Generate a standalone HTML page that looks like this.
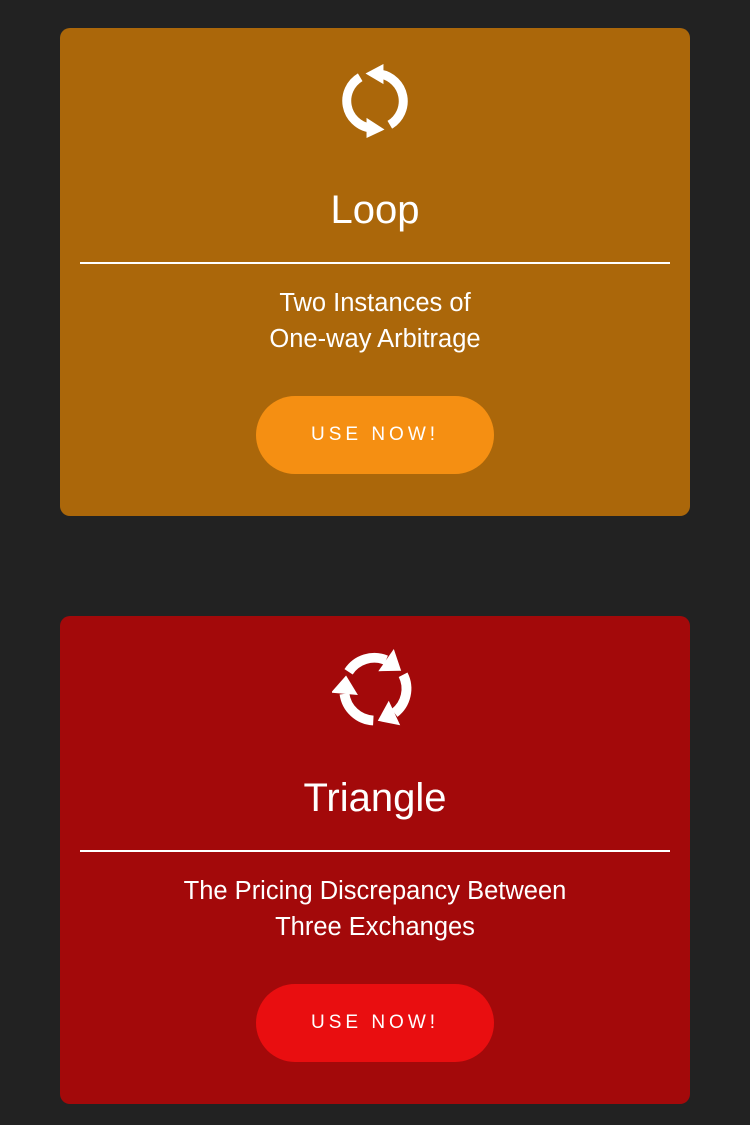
<!DOCTYPE html>
<html><head><meta charset="utf-8"><style>
body{margin:0;background:#222222;width:750px;height:1125px;position:relative;font-family:"Liberation Sans",sans-serif;color:#fff;overflow:hidden}
.card{position:absolute;left:60px;width:630px;height:488px;border-radius:10px}
.icon{position:absolute;left:50%;transform:translateX(-50%)}
.title{position:absolute;left:0;right:0;text-align:center;font-size:40px;font-weight:300;line-height:48px}
.hr{position:absolute;left:20px;right:20px;height:2px;background:#fff;top:234px}
.desc{position:absolute;left:0;right:0;top:257px;text-align:center;font-size:25.5px;line-height:36px}
.btn{position:absolute;left:196px;width:238px;height:78px;top:368px;border-radius:39px;text-align:center;line-height:78px;font-size:19px;letter-spacing:4px}
</style></head><body>
<div class="card" style="top:28px;background:#ab670a">
 <svg class="icon" style="top:36px" width="74" height="74" viewBox="0 0 70 70">
  <g fill="none" stroke="#fff" stroke-width="8.5">
   <path d="M21 12.5 A26 26 0 0 0 30 60.5"/>
   <path d="M49 57.5 A26 26 0 0 0 40 9.5"/>
  </g>
  <g fill="#fff"><polygon points="27,51 27,70 44,62"/><polygon points="43,0 43,19 26,9"/></g>
 </svg>
 <div class="title" style="top:158px">Loop</div>
 <div class="hr"></div>
 <div class="desc">Two Instances of<br>One-way Arbitrage</div>
 <div class="btn" style="background:#f58f12">USE NOW!</div>
</div>
<div class="card" style="top:616px;background:#a3090a">
 <svg class="icon" style="top:30px" width="86" height="86" viewBox="0 0 70 70">
  <defs><g id="a"><path d="M13.5 21 A25 25 0 0 1 44 11.5" fill="none" stroke="#fff" stroke-width="8"/><polygon transform="translate(44 11.5) rotate(35)" points="0,-11 0,11 15,0" fill="#fff"/></g></defs>
  <use href="#a"/><use href="#a" transform="rotate(120 35 35)"/><use href="#a" transform="rotate(240 35 35)"/>
 </svg>
 <div class="title" style="top:158px">Triangle</div>
 <div class="hr"></div>
 <div class="desc">The Pricing Discrepancy Between<br>Three Exchanges</div>
 <div class="btn" style="background:#e90e10">USE NOW!</div>
</div>
</body></html>
